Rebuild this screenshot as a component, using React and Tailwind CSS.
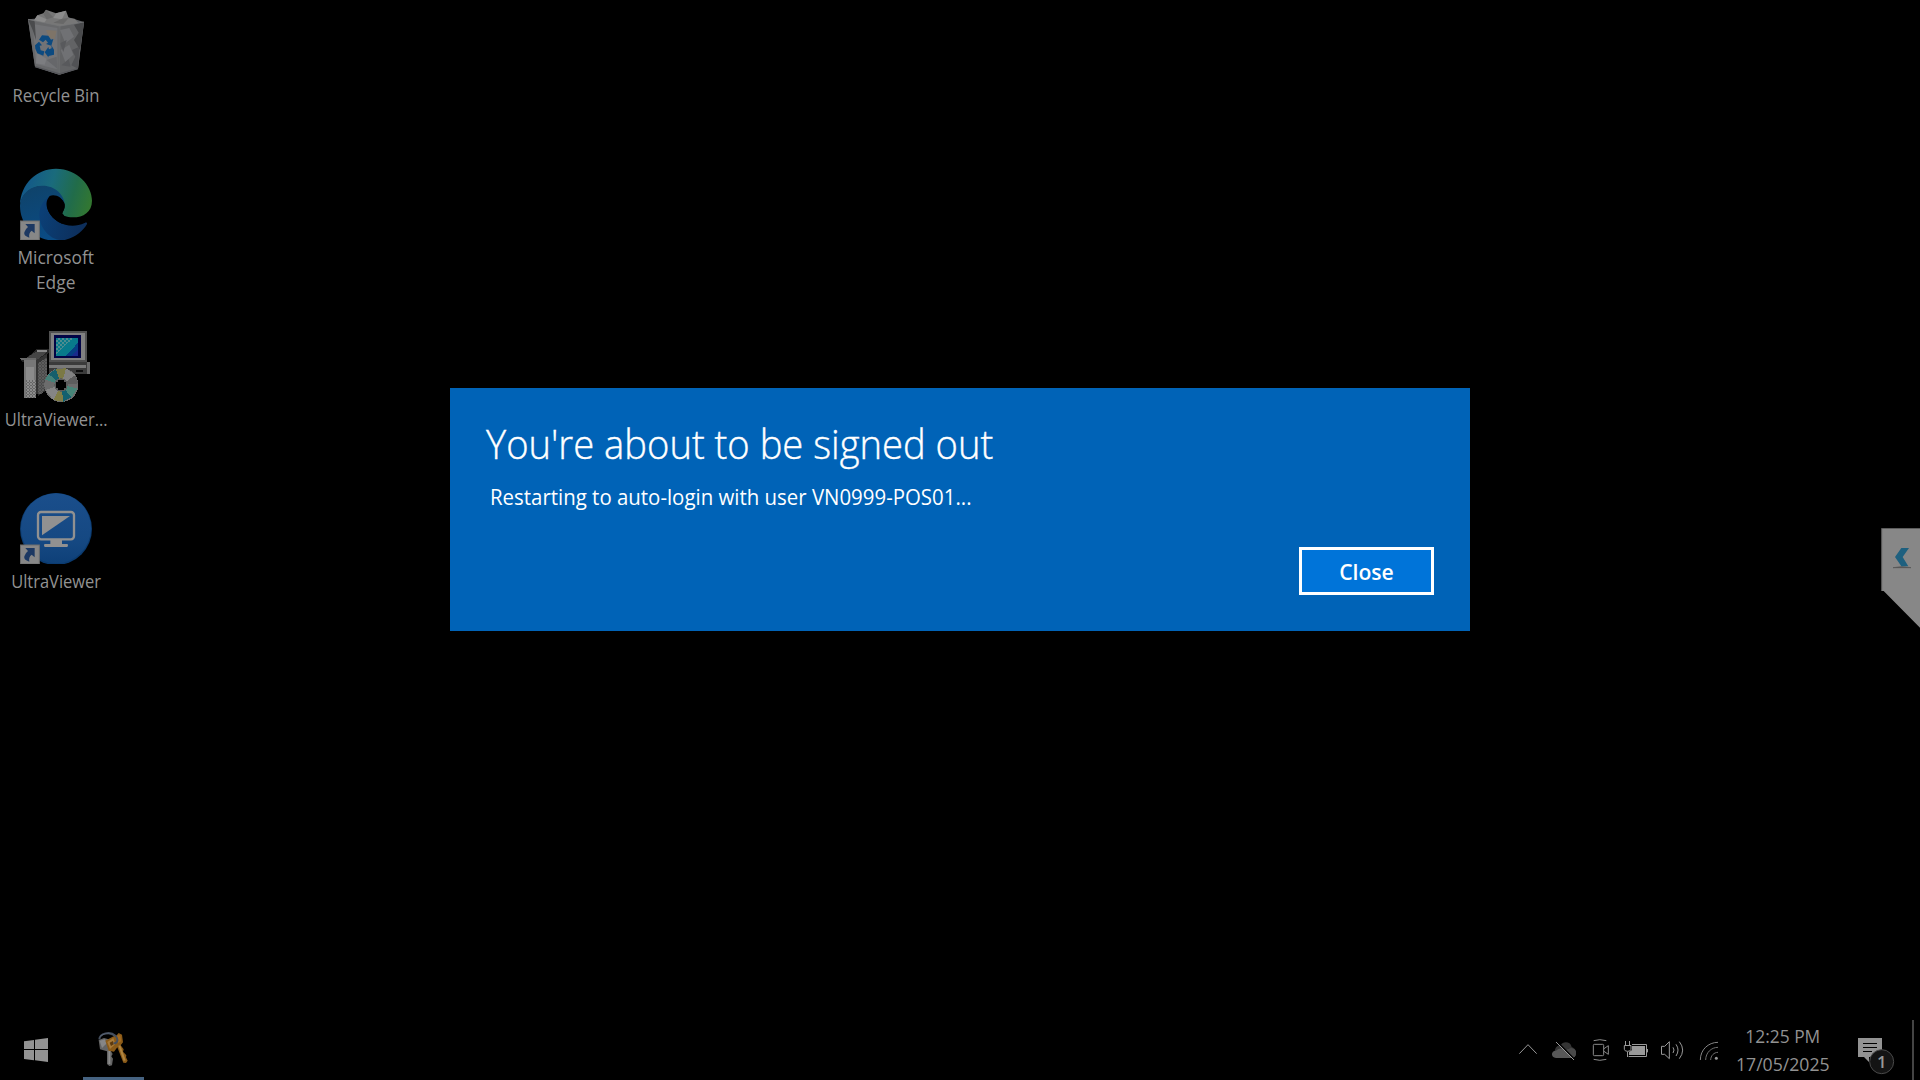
const FONT = "font-['Open_Sans','Noto_Sans',sans-serif]";

function ShortcutArrow({ y }) {
  return (
    <g>
      <rect x="61" y={y} width="57" height="57" fill="#878787" stroke="#6e6e6e" strokeWidth="3" />
      <path
        transform={`translate(61 ${y})`}
        d="M15 9H43V37L34 29Q24 36 27 50Q9 45 12 34Q14 25 23 18Z"
        fill="#1c3862"
      />
    </g>
  );
}

function RecycleBinIcon() {
  return (
    <svg className="size-[72px]" viewBox="60 18 216 216">
      <path d="M84 58L130 54L200 50L252 66L234 206L178 224L105 200Z" fill="#5f6164" />
      <path d="M99 66L112 46L130 40L138 29L168 40L198 32L206 54L224 56L236 70L170 84Z" fill="#777777" />
      <path d="M112 46L140 58L128 76L99 66Z" fill="#8a8a8a" />
      <path d="M138 29L160 52L140 58L130 42Z" fill="#6a6a6a" />
      <path d="M168 40L198 32L186 58L160 54Z" fill="#8c8c8c" />
      <path d="M206 54L190 72L160 68L186 56Z" fill="#686868" />
      <path d="M84 58L180 78L178 224L105 200Z" fill="#68696b" />
      <path d="M180 78L252 66L234 206L178 224Z" fill="#626365" />
      <path d="M98 72L172 84L172 208L108 192Z" fill="#727376" />
      <path d="M98 90L84 58L104 64L108 120Z" fill="#4a4b4d" />
      <path d="M252 66L222 74L236 98L222 120L240 150Z" fill="#494a4c" />
      <path d="M234 206L214 196L226 170L216 150L238 140Z" fill="#515255" />
      <path d="M180 90L208 84L222 110L196 130ZM182 150L208 134L220 164L196 186Z" fill="#707174" />
      <path d="M180 130L200 120L190 156ZM184 196L206 178L212 200Z" fill="#58595c" />
      <path d="M138 90L170 92L164 118L146 112Z" fill="#7e7468" />
      <path d="M110 160L140 176L134 194L108 190Z" fill="#7c7d80" />
      <path d="M140 180L170 170L172 206Z" fill="#66676a" />
      <path d="M84 58L180 78L252 66" fill="none" stroke="#77787a" strokeWidth="2" />
      <path d="M180 78L178 222" fill="none" stroke="#707173" strokeWidth="2" />
      <path d="M105 200L178 222L234 206" fill="none" stroke="#55565a" strokeWidth="4" />
      <g fill="#0c4a80">
        <path d="M117 119L126 106L145 107L153 119L160 117L154 137L138 132L144 128L137 119L129 127Z" />
        <path d="M105 136L117 125L126 136L119 137L122 151L133 154L130 167L112 160L106 146Z" />
        <path d="M134 157L145 141L147 148L155 145L154 136L162 149L162 164L146 168L145 172Z" />
      </g>
    </svg>
  );
}

function EdgeIcon() {
  return (
    <svg className="size-[72px]" viewBox="60 39 216 216">
      <defs>
        <linearGradient id="edgeTop" x1="62" y1="90" x2="276" y2="150" gradientUnits="userSpaceOnUse">
          <stop offset="0" stopColor="#12568a" />
          <stop offset="0.4" stopColor="#1a6b7c" />
          <stop offset="0.72" stopColor="#216c4a" />
          <stop offset="1" stopColor="#34782f" />
        </linearGradient>
        <linearGradient id="edgeBody" x1="70" y1="90" x2="130" y2="250" gradientUnits="userSpaceOnUse">
          <stop offset="0" stopColor="#0f4268" />
          <stop offset="1" stopColor="#0a4b84" />
        </linearGradient>
        <linearGradient id="edgeSwoosh" x1="120" y1="190" x2="250" y2="220" gradientUnits="userSpaceOnUse">
          <stop offset="0" stopColor="#0b3f76" />
          <stop offset="1" stopColor="#0d2e5a" />
        </linearGradient>
      </defs>
      <path d="M60 148C62 88 109 41 168 41C233 41 276 92 276 137C276 171 250 187 219 187C199 187 185 181 187 174C191 166 195 160 194 150C192 127 170 106 134 93C96 93 70 110 60 148Z" fill="url(#edgeTop)" />
      <path d="M60 150C64 112 94 92 128 92C166 92 193 120 194 148C186 124 154 114 132 155C116 195 140 238 192 256C116 268 59 216 60 150Z" fill="url(#edgeBody)" />
      <path d="M149 123C118 144 110 180 126 214C143 246 170 260 197 254C229 247 250 226 261 207C262 202 258 202 254 204C210 224 164 204 146 170C137 151 141 135 149 123Z" fill="url(#edgeSwoosh)" />
      <path d="M149 123C136 138 138 154 146 170C154 186 170 200 188 207L192 180C189 178 186 177 187 174C191 166 195 160 194 148C188 126 164 116 149 123Z" fill="#000000" />
      <ShortcutArrow y={198} />
    </svg>
  );
}

function InstallerIcon() {
  return (
    <svg className="size-[72px]" viewBox="60 30 216 216" shapeRendering="crispEdges">
      <defs>
        <pattern id="checks" width="9" height="9" patternUnits="userSpaceOnUse">
          <rect width="9" height="9" fill="#666666" />
          <rect width="4.5" height="4.5" fill="#8d8d8d" />
          <rect x="4.5" y="4.5" width="4.5" height="4.5" fill="#8d8d8d" />
        </pattern>
        <pattern id="screenChecks" width="12" height="12" patternUnits="userSpaceOnUse">
          <rect width="6" height="6" fill="#4d8d90" />
          <rect x="6" y="6" width="6" height="6" fill="#4d8d90" />
        </pattern>
      </defs>
      <path d="M60 115H78L110 88H147V96L141 102V210L114 228V126H66Z" fill="#252525" />
      <path d="M78 115L112 93H144L112 120Z" fill="#454545" />
      <path d="M112 90H141V96H112Z" fill="#888888" />
      <path d="M60 115H108V121H66Z" fill="#696969" />
      <path d="M72 121H108V138H72Z" fill="#777777" />
      <path d="M108 121L141 102V205L126 222H108Z" fill="#343434" />
      <path d="M114 130L141 112V190L126 222H114Z" fill="url(#checks)" opacity=".45" />
      <path d="M72 138H108V234H72Z" fill="#777777" />
      <path d="M78 141H102V180H78Z" fill="#8b8b8b" />
      <path d="M78 180H108V234H78Z" fill="url(#checks)" />
      <path d="M147 33H261V126H147Z" fill="#515151" />
      <path d="M153 39H255V120H153Z" fill="#818181" />
      <path d="M162 45H243V114H162Z" fill="#020446" />
      <path d="M168 54H234V108H168Z" fill="#087a8b" />
      <path d="M198 108L234 68V108Z" fill="#063f83" />
      <path d="M216 108L234 88V108Z" fill="#1a2a8c" />
      <path d="M168 54H220L168 102Z" fill="url(#screenChecks)" />
      <path d="M148 126H270V162H148Z" fill="#3b3b3b" />
      <path d="M148 135H258V144H148Z" fill="#797979" />
      <path d="M261 126H270V162H261Z" fill="#6a6a6a" />
      <path d="M228 150H250V156H228Z" fill="#0c0c0c" />
      <circle cx="184" cy="195" r="51" fill="#6c6c6c" />
      <path d="M184 195L168 147L198 145Z" fill="#7b7945" />
      <path d="M184 195L144 164L168 147Z" fill="#155f6c" />
      <path d="M184 195L135 178L146 162Z" fill="#448078" />
      <path d="M184 195L198 145L226 165Z" fill="#828282" />
      <path d="M184 195L226 165L235 190Z" fill="#5d5d5d" />
      <path d="M184 195L232 205L214 232Z" fill="#478477" />
      <path d="M184 195L214 232L190 245Z" fill="#13606f" />
      <path d="M184 195L190 245L160 240Z" fill="#807d47" />
      <path d="M184 195L160 240L136 210Z" fill="#858585" />
      <circle cx="183" cy="195" r="20" fill="#5c5c5c" />
      <path d="M174 180H192V186H198V204H192V210H174V204H168V186H174Z" fill="#000000" />
    </svg>
  );
}

function UltraViewerIcon() {
  return (
    <svg className="size-[72px]" viewBox="60 36 216 216">
      <defs>
        <linearGradient id="uvDisc" x1="0" y1="0" x2="0" y2="1">
          <stop offset="0" stopColor="#1a4e8b" />
          <stop offset="0.7" stopColor="#154882" />
          <stop offset="1" stopColor="#0e4078" />
        </linearGradient>
      </defs>
      <circle cx="168" cy="147" r="108" fill="#0b3b70" />
      <circle cx="168" cy="145" r="105" fill="url(#uvDisc)" />
      <rect x="114" y="96" width="108" height="82" rx="9" fill="none" stroke="#919191" strokeWidth="7" />
      <path d="M126 108H210L126 166Z" fill="#919191" />
      <path d="M151 179H186V192H201Q204 192 204 196Q204 201 201 201H135Q132 201 132 196Q132 192 135 192H151Z" fill="#919191" />
      <ShortcutArrow y={195} />
    </svg>
  );
}

function DesktopShortcut({ icon, lines, fit }) {
  return (
    <div className="flex h-[162px] w-[112px] flex-col items-center">
      {icon}
      <div className={`mt-[5px] text-center text-[18px] leading-[25px] whitespace-nowrap text-[#929292] ${fit}`}>
        {lines.map((line) => (
          <div key={line}>{line}</div>
        ))}
      </div>
    </div>
  );
}

function StartIcon() {
  return (
    <svg className="h-6 w-6" viewBox="72 84 72 72" fill="#939393">
      <path d="M72 94L102 90V117H72ZM105 89L144 84V117H105ZM72 120H102V151L72 147ZM105 120H144V156L105 151Z" />
    </svg>
  );
}

function KeysIcon() {
  return (
    <svg className="h-[36px] w-[33px]" viewBox="291 63 99 108">
      <path d="M296 90L312 84L334 90L338 114L332 122L338 132L334 139L339 146L336 166L328 168L321 162V124L300 118Z" fill="#646464" />
      <path d="M299 92L314 88L322 98L306 114Z" fill="#868686" />
      <path d="M325 122H331V162H325Z" fill="#8c8c8c" />
      <path d="M316 92L338 80L350 76L356 69L366 74L369 97L362 106L371 118L369 125L379 136L378 142L383 152L378 159L370 158L352 112L342 125L326 122Z" fill="#8a5a18" />
      <path d="M322 96L340 84L346 102L330 117Z" fill="#a87a38" />
      <path d="M351 77L361 75L364 94L354 99Z" fill="#a26a20" />
      <path d="M355 107L361 106L377 151L371 153Z" fill="#ae8440" />
      <path d="M329 98L339 93L341 103L333 108Z" fill="#5d390d" />
      <path d="M298 88C299 70 330 62 346 77C357 88 352 101 341 100" fill="none" stroke="#454f5e" strokeWidth="6" />
      <path d="M301 79C310 70 331 68 343 79" fill="none" stroke="#6b788b" strokeWidth="1.6" />
    </svg>
  );
}

const slot = "h-[60px] w-9";

function TrayIcons() {
  return (
    <div className="flex">
      <svg className={slot} viewBox="30 30 108 180" fill="none" stroke="#999999" strokeWidth="3">
        <path d="M58 131L84 104L110 131" />
      </svg>
      <svg className={slot} viewBox="138 30 108 180">
        <path d="M164 128C164 112 172 106 182 106C187 94 211 92 215 111C224 114 228 120 228 128L190 130Z" fill="#343434" />
        <path d="M168 144C152 142 152 122 168 122C178 112 192 114 198 124C205 110 228 114 228 128C228 138 223 144 214 144Z" fill="#575757" />
        <path d="M198 124C205 110 228 114 228 128C228 138 223 144 214 144Z" fill="#484848" />
        <path d="M172 95L225 149" stroke="#000000" strokeWidth="4" />
        <path d="M168 96L222 150" stroke="#999999" strokeWidth="3" />
      </svg>
      <svg className={slot} viewBox="246 30 108 180" fill="none" stroke="#8b8b8b" strokeWidth="3">
        <rect x="280" y="103" width="31" height="34" rx="3" />
        <path d="M312 116L325 107V133L312 124M281 92Q299 86 319 92M281 148Q299 154 319 148" />
      </svg>
      <svg className={slot} viewBox="354 30 108 180" fill="none" stroke="#999999" strokeWidth="3">
        <path d="M396 103.5H439.5V139.5H386M442.5 117V127" />
        <path d="M396 108H435V135H387V126L396 120Z" fill="#999999" stroke="none" />
        <path d="M373 106.5H393V118Q392 124 383 124Q374 124 373 118ZM376.5 93V105M388.5 93V105M382.5 125V141" />
      </svg>
      <svg className={slot} viewBox="462 30 108 180" fill="none" stroke="#999999" strokeWidth="3">
        <path d="M484.5 109H494L508 95V146L494 133H484.5Z" />
        <path d="M519 112Q525 120 519 129M528 103Q540 120 528 138M538 95Q558 120 538 146" />
      </svg>
      <svg className={slot} viewBox="570 30 108 180" fill="none" stroke="#858585" strokeWidth="3">
        <path d="M601 150C601 119 625 97 654 97" />
        <path d="M617 150C617 128 634 112 654 112M632 150C632 137 642 127 654 127" stroke="#707070" />
        <circle cx="649" cy="145" r="4.5" fill="#999999" stroke="none" />
      </svg>
    </div>
  );
}

function ActionCenter() {
  return (
    <svg className="h-[60px] w-12" viewBox="432 30 144 180">
      <path d="M444 84H516V141H477V156L462 141H444Z" fill="#939393" />
      <path d="M459 100.5H501M459 112.5H501M459 124.5H486" stroke="#000000" strokeWidth="3" />
      <circle cx="515" cy="155" r="36" fill="#141414" stroke="#494949" strokeWidth="3" />
      <text x="515" y="173" textAnchor="middle" fontSize="50" fontWeight="600" fill="#999999">1</text>
    </svg>
  );
}

export default function App() {
  return (
    <div className={`relative flex h-[1080px] w-[1920px] flex-col overflow-hidden bg-black ${FONT}`}>
      <main className="h-[1020px] pt-[6px]">
        <DesktopShortcut icon={<RecycleBinIcon />} lines={["Recycle Bin"]} fit="scale-x-[0.925]" />
        <DesktopShortcut icon={<EdgeIcon />} lines={["Microsoft", "Edge"]} fit="scale-x-[0.965]" />
        <DesktopShortcut icon={<InstallerIcon />} lines={["UltraViewer..."]} fit="scale-x-[0.915]" />
        <DesktopShortcut icon={<UltraViewerIcon />} lines={["UltraViewer"]} fit="scale-x-[0.915]" />
      </main>

      <footer className="flex h-[60px] justify-between">
        <div className="flex">
          <button className="flex w-[72px] items-center justify-center"><StartIcon /></button>
          <button className="ml-[11px] flex w-[61px] flex-col items-center border-b-[3px] border-[#466381] pt-[11px]">
            <KeysIcon />
          </button>
        </div>
        <div className="flex">
          <TrayIcons />
          <div className="flex w-[114px] flex-col items-center pt-[2px] text-[18px] leading-[28px] whitespace-nowrap text-[#929292]">
            <span className="scale-x-[0.965]">12:25 PM</span>
            <span className="scale-x-[0.98]">17/05/2025</span>
          </div>
          <div className="ml-[14px] flex"><ActionCenter /></div>
          <div className="ml-[10px] w-2 border-l-2 border-[#444444]" />
        </div>
      </footer>

      <div className="absolute top-[528px] right-0 h-[100px] w-[39px]">
        <svg className="h-[100px] w-[39px]" viewBox="63 54 117 300">
          <path d="M65 54H182V355L71 243H65Z" fill="#878787" />
          <path d="M180 55.5H65V243" fill="none" stroke="#5c5c5c" strokeWidth="3" />
          <path d="M99 173Q125 167 153 173Z" fill="#555555" stroke="#555555" strokeWidth="2" />
          <path d="M124 114H147L128 141L145 169H124L105 141Z" fill="#1e607f" />
        </svg>
      </div>

      <section role="dialog" className="absolute top-[388px] left-[450px] flex h-[243px] w-[1020px] flex-col bg-[#0063b7] px-9 text-white">
        <h1 className="mt-[29px] origin-left scale-x-[0.954] self-start text-[40px] leading-[54px] font-light whitespace-nowrap [-webkit-text-stroke:0.4px_white]">
          You're about to be signed out
        </h1>
        <p className="mt-[10px] ml-1 origin-left scale-x-[0.928] self-start text-[22px] leading-[30px] whitespace-nowrap">
          Restarting to auto-login with user VN0999-POS01...
        </p>
        <button className="mt-[36px] flex h-[48px] w-[135px] items-center justify-center self-end border-[3px] border-white bg-[#0074d9] text-[22px] font-semibold">
          <span className="scale-x-[0.96]">Close</span>
        </button>
      </section>
    </div>
  );
}
